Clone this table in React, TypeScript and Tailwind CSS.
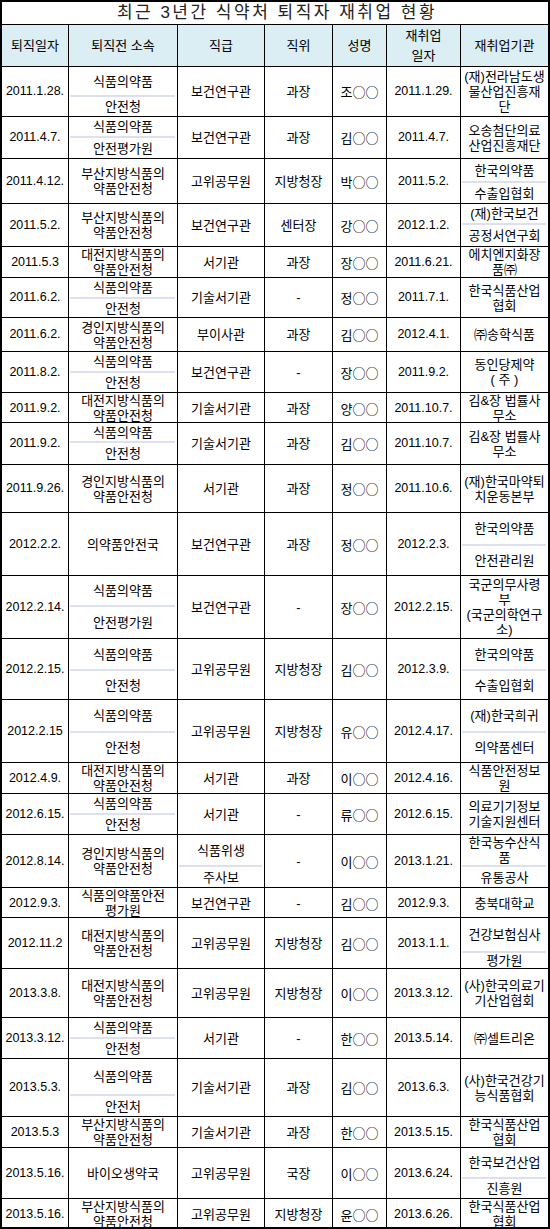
import React from "react";

type Split = { s: string; t: string[]; b: string[] };
type Cell = string[] | Split;
type Row = {
  h: string;
  date: string;
  org: Cell;
  grade: Cell;
  pos: Cell;
  name: Cell;
  rdate: string;
  inst: Cell;
  last?: boolean;
};

const S = (s: string, t: string[], b: string[]): Split => ({ s, t, b });

const rows: Row[] = [
  { h: "h-[50px]", date: "2011.1.28.", org: S("h-[28px]", ["식품의약품"], ["안전청"]), grade: ["보건연구관"], pos: ["과장"], name: ["조○○"], rdate: "2011.1.29.", inst: ["(재)전라남도생", "물산업진흥재", "단"] },
  { h: "h-[42px]", date: "2011.4.7.", org: S("h-[19px]", ["식품의약품"], ["안전평가원"]), grade: ["보건연구관"], pos: ["과장"], name: ["김○○"], rdate: "2011.4.7.", inst: ["오송첨단의료", "산업진흥재단"] },
  { h: "h-[45px]", date: "2011.4.12.", org: ["부산지방식품의", "약품안전청"], grade: ["고위공무원"], pos: ["지방청장"], name: ["박○○"], rdate: "2011.5.2.", inst: S("h-[22px]", ["한국의약품"], ["수출입협회"]) },
  { h: "h-[43px]", date: "2011.5.2.", org: ["부산지방식품의", "약품안전청"], grade: ["보건연구관"], pos: ["센터장"], name: ["강○○"], rdate: "2012.1.2.", inst: S("h-[19px]", ["(재)한국보건"], ["공정서연구회"]) },
  { h: "h-[31px]", date: "2011.5.3", org: ["대전지방식품의", "약품안전청"], grade: ["서기관"], pos: ["과장"], name: ["장○○"], rdate: "2011.6.21.", inst: ["에치엔지화장", "품㈜"] },
  { h: "h-[40px]", date: "2011.6.2.", org: S("h-[19px]", ["식품의약품"], ["안전청"]), grade: ["기술서기관"], pos: ["-"], name: ["정○○"], rdate: "2011.7.1.", inst: ["한국식품산업", "협회"] },
  { h: "h-[34px]", date: "2011.6.2.", org: ["경인지방식품의", "약품안전청"], grade: ["부이사관"], pos: ["과장"], name: ["김○○"], rdate: "2012.4.1.", inst: ["㈜송학식품"] },
  { h: "h-[41px]", date: "2011.8.2.", org: S("h-[19px]", ["식품의약품"], ["안전청"]), grade: ["보건연구관"], pos: ["-"], name: ["장○○"], rdate: "2011.9.2.", inst: ["동인당제약", "( 주 )"] },
  { h: "h-[30px]", date: "2011.9.2.", org: ["대전지방식품의", "약품안전청"], grade: ["기술서기관"], pos: ["과장"], name: ["양○○"], rdate: "2011.10.7.", inst: ["김&장 법률사", "무소"] },
  { h: "h-[42px]", date: "2011.9.2.", org: S("h-[18px]", ["식품의약품"], ["안전청"]), grade: ["기술서기관"], pos: ["과장"], name: ["김○○"], rdate: "2011.10.7.", inst: ["김&장 법률사", "무소"] },
  { h: "h-[48px]", date: "2011.9.26.", org: ["경인지방식품의", "약품안전청"], grade: ["서기관"], pos: ["과장"], name: ["정○○"], rdate: "2011.10.6.", inst: ["(재)한국마약퇴", "치운동본부"] },
  { h: "h-[63px]", date: "2012.2.2.", org: ["의약품안전국"], grade: ["보건연구관"], pos: ["과장"], name: ["정○○"], rdate: "2012.2.3.", inst: S("h-[31px]", ["한국의약품"], ["안전관리원"]) },
  { h: "h-[63px]", date: "2012.2.14.", org: S("h-[29px]", ["식품의약품"], ["안전평가원"]), grade: ["보건연구관"], pos: ["-"], name: ["장○○"], rdate: "2012.2.15.", inst: ["국군의무사령", "부", "(국군의학연구", "소)"] },
  { h: "h-[61px]", date: "2012.2.15.", org: S("h-[30px]", ["식품의약품"], ["안전청"]), grade: ["고위공무원"], pos: ["지방청장"], name: ["김○○"], rdate: "2012.3.9.", inst: S("h-[30px]", ["한국의약품"], ["수출입협회"]) },
  { h: "h-[63px]", date: "2012.2.15", org: S("h-[31px]", ["식품의약품"], ["안전청"]), grade: ["고위공무원"], pos: ["지방청장"], name: ["유○○"], rdate: "2012.4.17.", inst: S("h-[31px]", ["(재)한국희귀"], ["의약품센터"]) },
  { h: "h-[31px]", date: "2012.4.9.", org: ["대전지방식품의", "약품안전청"], grade: ["서기관"], pos: ["과장"], name: ["이○○"], rdate: "2012.4.16.", inst: ["식품안전정보", "원"] },
  { h: "h-[41px]", date: "2012.6.15.", org: S("h-[19px]", ["식품의약품"], ["안전청"]), grade: ["서기관"], pos: ["-"], name: ["류○○"], rdate: "2012.6.15.", inst: ["의료기기정보", "기술지원센터"] },
  { h: "h-[53px]", date: "2012.8.14.", org: ["경인지방식품의", "약품안전청"], grade: S("h-[30px]", ["식품위생"], ["주사보"]), pos: ["-"], name: ["이○○"], rdate: "2013.1.21.", inst: S("h-[30px]", ["한국농수산식", "품"], ["유통공사"]) },
  { h: "h-[30px]", date: "2012.9.3.", org: ["식품의약품안전", "평가원"], grade: ["보건연구관"], pos: ["-"], name: ["김○○"], rdate: "2012.9.3.", inst: ["충북대학교"] },
  { h: "h-[51px]", date: "2012.11.2", org: ["대전지방식품의", "약품안전청"], grade: ["고위공무원"], pos: ["지방청장"], name: ["김○○"], rdate: "2013.1.1.", inst: S("h-[33px]", ["건강보험심사"], ["평가원"]) },
  { h: "h-[49px]", date: "2013.3.8.", org: ["대전지방식품의", "약품안전청"], grade: ["고위공무원"], pos: ["지방청장"], name: ["이○○"], rdate: "2013.3.12.", inst: ["(사)한국의료기", "기산업협회"] },
  { h: "h-[41px]", date: "2013.3.12.", org: S("h-[19px]", ["식품의약품"], ["안전청"]), grade: ["서기관"], pos: ["-"], name: ["한○○"], rdate: "2013.5.14.", inst: ["㈜셀트리온"] },
  { h: "h-[58px]", date: "2013.5.3.", org: S("h-[35px]", ["식품의약품"], ["안전처"]), grade: ["기술서기관"], pos: ["과장"], name: ["김○○"], rdate: "2013.6.3.", inst: ["(사)한국건강기", "능식품협회"] },
  { h: "h-[31px]", date: "2013.5.3", org: ["부산지방식품의", "약품안전청"], grade: ["기술서기관"], pos: ["과장"], name: ["한○○"], rdate: "2013.5.15.", inst: ["한국식품산업", "협회"] },
  { h: "h-[51px]", date: "2013.5.16.", org: ["바이오생약국"], grade: ["고위공무원"], pos: ["국장"], name: ["이○○"], rdate: "2013.6.24.", inst: S("h-[29px]", ["한국보건산업"], ["진흥원"]) },
  { h: "h-[28px]", date: "2013.5.16.", org: ["부산지방식품의", "약품안전청"], grade: ["고위공무원"], pos: ["지방청장"], name: ["윤○○"], rdate: "2013.6.26.", inst: ["한국식품산업", "협회"], last: true },
];

const GRID = "grid grid-cols-[67px_109px_87px_68px_54px_74px_87px]";

function Lines({ lines }: { lines: string[] }) {
  return (
    <>
      {lines.map((l, i) => (
        <span key={i} className="block whitespace-nowrap">
          {l}
        </span>
      ))}
    </>
  );
}

function CellView({ c, last, cls = "" }: { c: Cell; last?: boolean; cls?: string }) {
  const edge = last ? "" : "border-r border-black";
  if (Array.isArray(c)) {
    return (
      <div className={`${edge} ${cls} flex flex-col items-center justify-center text-center leading-[15px]`}>
        <Lines lines={c} />
      </div>
    );
  }
  return (
    <div className={`${edge} ${cls} flex flex-col text-center leading-[15px]`}>
      <div className={`${c.s} flex flex-col items-center justify-center`}>
        <Lines lines={c.t} />
      </div>
      <div className="h-[2px] bg-[#dde1ef] mr-[2px] ml-[1px]" />
      <div className="flex-1 flex flex-col items-center justify-center">
        <Lines lines={c.b} />
      </div>
    </div>
  );
}

export default function App() {
  return (
    <div className="w-[550px] bg-white text-black text-[13px] font-['Liberation_Sans','Noto_Sans_CJK_KR',sans-serif]">
      <div className="border-2 border-black">
        <div className="h-[23px] border-b border-black flex items-center justify-center text-[17px] tracking-[2.5px] text-[#222] pl-[4px]">
          최근 3년간 식약처 퇴직자 재취업 현황
        </div>
        <div className={`${GRID} h-[42px] border-b border-black bg-[#daeef3]`}>
          <div className="border-r border-black flex items-center justify-center">퇴직일자</div>
          <div className="border-r border-black flex items-center justify-center">퇴직전 소속</div>
          <div className="border-r border-black flex items-center justify-center">직급</div>
          <div className="border-r border-black flex items-center justify-center">직위</div>
          <div className="border-r border-black flex items-center justify-center">성명</div>
          <div className="border-r border-black flex flex-col items-center justify-center leading-[20px]">
            <span>재취업</span>
            <span>일자</span>
          </div>
          <div className="flex items-center justify-center">재취업기관</div>
        </div>
        {rows.map((r, i) => (
          <div key={i} className={`${GRID} ${r.h} ${r.last ? "" : "border-b border-black"}`}>
            <div className="border-r border-black flex items-center justify-center text-[12.5px] whitespace-nowrap">
              {r.date}
            </div>
            <CellView c={r.org} />
            <CellView c={r.grade} />
            <CellView c={r.pos} />
            <CellView c={r.name} cls="font-['Noto_Sans_CJK_KR',sans-serif]" />
            <div className="border-r border-black flex items-center justify-center text-[12.5px] whitespace-nowrap">
              {r.rdate}
            </div>
            <CellView c={r.inst} last />
          </div>
        ))}
      </div>
    </div>
  );
}
